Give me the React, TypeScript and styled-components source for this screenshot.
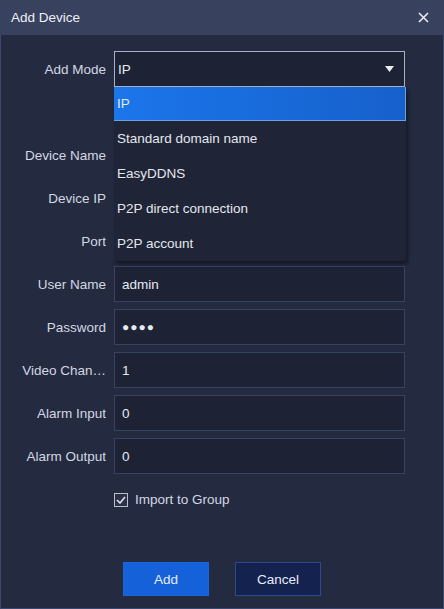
import React from 'react'
import styled, { createGlobalStyle } from 'styled-components'

const GlobalStyle = createGlobalStyle`
  html, body {
    margin: 0;
    padding: 0;
    background: #252c42;
  }
  * {
    box-sizing: border-box;
  }
`

const Colors = {
  header: '#38425f',
  body: '#242b41',
  input: '#1d2335',
  inputBorder: '#3a4263',
  label: '#d3d7e2',
  text: '#e6e9f0',
  list: '#1f2537',
}

const Window = styled.div`
  display: flex;
  flex-direction: column;
  width: 444px;
  height: 609px;
  background: ${Colors.body};
  border: 1px solid #3c4770;
  border-top: none;
  font-family: 'Liberation Sans', Arial, sans-serif;
  font-size: 13.5px;
  color: ${Colors.text};
`

const Header = styled.header`
  display: flex;
  align-items: center;
  justify-content: space-between;
  height: 35px;
  padding: 0 14px 0 11px;
  margin: 0 -1px;
  background: ${Colors.header};
`

const Title = styled.h1`
  margin: 0;
  font-size: 13.5px;
  font-weight: normal;
  color: #eef0f5;
`

const CloseButton = styled.button`
  display: grid;
  place-items: center;
  width: 14px;
  height: 14px;
  padding: 0;
  border: none;
  background: none;
  cursor: pointer;
`

const Body = styled.div`
  display: flex;
  flex-direction: column;
  flex: 1;
  padding: 16px 0 0;
`

const Form = styled.div`
  display: grid;
  grid-template-columns: 105px 291px;
  column-gap: 8px;
  row-gap: 7px;
  grid-auto-rows: 36px;
`

const Label = styled.label`
  display: flex;
  align-items: center;
  justify-content: flex-end;
  color: ${Colors.label};
  white-space: nowrap;
  overflow: hidden;
`

const Field = styled.div`
  position: relative;
`

const Input = styled.div<{ $focused?: boolean }>`
  display: flex;
  align-items: center;
  height: 100%;
  padding: 0 7px;
  background: ${Colors.input};
  border: 1px solid ${(p) => (p.$focused ? '#a9b1c9' : Colors.inputBorder)};
  color: ${Colors.text};
`

const SelectBox = styled(Input)`
  justify-content: space-between;
  padding: 0 10px 0 3px;
`

const Dots = styled.span`
  letter-spacing: 1px;
  font-size: 12px;
`

const List = styled.ul`
  position: absolute;
  top: 100%;
  left: 0;
  width: 292px;
  margin: 0;
  padding: 0;
  list-style: none;
  background: ${Colors.list};
  box-shadow: 2px 3px 4px rgba(0, 0, 0, 0.45);
  z-index: 10;
`

const Option = styled.li<{ $selected?: boolean }>`
  display: flex;
  align-items: center;
  height: ${(p) => (p.$selected ? '34px' : '35px')};
  padding: 0 3px;
  color: #e4e7ee;
  background: ${(p) => (p.$selected ? 'linear-gradient(90deg, #1b76ea, #1660cc)' : 'transparent')};
  border-bottom: ${(p) => (p.$selected ? '1px solid #6e9ee4' : 'none')};
  border-right: ${(p) => (p.$selected ? '1px solid #6e9ee4' : 'none')};
`

const CheckRow = styled.label`
  display: flex;
  align-items: center;
  gap: 7px;
  margin: 18px 0 0 113px;
  color: ${Colors.label};
`

const Box = styled.span`
  display: grid;
  place-items: center;
  width: 14px;
  height: 14px;
  border: 1px solid #b7bdcd;
  background: #2a3148;
`

const Footer = styled.div`
  display: flex;
  justify-content: center;
  gap: 26px;
  margin-top: 55px;
`

const Button = styled.button<{ $primary?: boolean }>`
  width: 86px;
  height: 34px;
  font-family: inherit;
  font-size: 13.5px;
  color: #e8ecf6;
  background: ${(p) => (p.$primary ? '#1561d9' : '#142250')};
  border: 1px solid ${(p) => (p.$primary ? '#1a66dd' : '#2b4a8c')};
  cursor: pointer;
`

const options = ['IP', 'Standard domain name', 'EasyDDNS', 'P2P direct connection', 'P2P account']

const fields: [string, React.ReactNode][] = [
  ['', ''],
  ['Device Name', ''],
  ['Device IP', ''],
  ['Port', ''],
  ['User Name', 'admin'],
  ['Password', <Dots key="p">●●●●</Dots>],
  ['Video Chan…', '1'],
  ['Alarm Input', '0'],
  ['Alarm Output', '0'],
]

export default function App() {
  return (
    <>
      <GlobalStyle />
      <Window>
        <Header>
          <Title>Add Device</Title>
          <CloseButton aria-label="close">
            <svg width="11" height="11" viewBox="0 0 11 11">
              <path d="M1 1L10 10M10 1L1 10" stroke="#e8ebf2" strokeWidth="1.6" />
            </svg>
          </CloseButton>
        </Header>
        <Body>
          <Form>
            <Label>Add Mode</Label>
            <Field>
              <SelectBox $focused>
                <span>IP</span>
                <svg width="9" height="6" viewBox="0 0 9 6">
                  <path d="M0 0H9L4.5 6Z" fill="#e8ebf2" />
                </svg>
              </SelectBox>
              <List>
                {options.map((o, i) => (
                  <Option key={o} $selected={i === 0}>
                    {o}
                  </Option>
                ))}
              </List>
            </Field>
            {fields.map(([label, value], i) =>
              label ? (
                <React.Fragment key={i}>
                  <Label>{label}</Label>
                  <Input>{value}</Input>
                </React.Fragment>
              ) : (
                <React.Fragment key={i}>
                  <span />
                  <span />
                </React.Fragment>
              )
            )}
          </Form>
          <CheckRow>
            <Box>
              <svg width="10" height="8" viewBox="0 0 10 8">
                <path d="M1 4L4 7L9 1" stroke="#dfe3ec" strokeWidth="1.6" fill="none" />
              </svg>
            </Box>
            Import to Group
          </CheckRow>
          <Footer>
            <Button $primary>Add</Button>
            <Button>Cancel</Button>
          </Footer>
        </Body>
      </Window>
    </>
  )
}
